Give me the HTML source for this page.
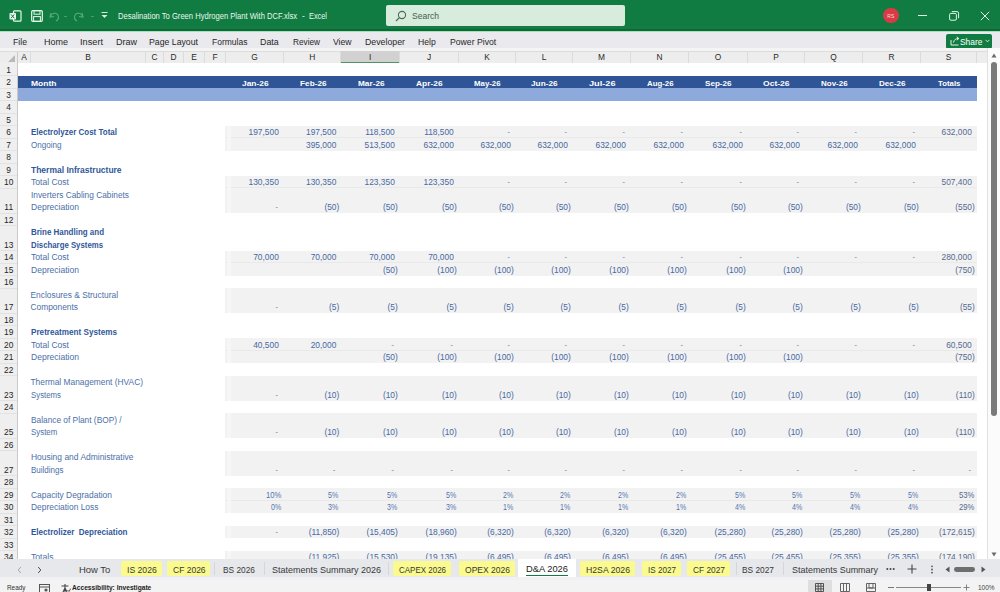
<!DOCTYPE html>
<html><head><meta charset="utf-8"><style>
html,body{margin:0;padding:0;}
body{width:1000px;height:592px;position:relative;overflow:hidden;background:#fff;font-family:"Liberation Sans", sans-serif;}
.b{position:absolute;}
.t{position:absolute;white-space:pre;line-height:1;}
</style></head><body>
<div class='b' style='left:0px;top:0px;width:1000.00px;height:31.00px;background:#107c41;'></div>
<div class='b' style='left:0px;top:26px;width:1000.00px;height:2.00px;background:#187a44;'></div>
<div class='b' style='left:0px;top:29px;width:1000.00px;height:1.80px;background:#0b6a36;'></div>
<div class='b' style='left:0px;top:30.8px;width:1000.00px;height:1.00px;background:#a6dfbb;'></div>
<svg class='b' style='left:9px;top:9.5px;' width='13' height='12' viewBox='0 0 13 12'><rect x='4.5' y='0.8' width='7.5' height='10.4' rx='1' fill='none' stroke='#e9f7ee' stroke-width='1.2'/><rect x='0.5' y='3' width='6.5' height='6.5' rx='0.8' fill='#e9f7ee'/><path d='M2 4.4 L5.3 8.2 M5.3 4.4 L2 8.2' stroke='#107c41' stroke-width='1'/></svg>
<svg class='b' style='left:31px;top:9.5px;' width='12' height='12' viewBox='0 0 12 12'><rect x='0.7' y='0.7' width='10.6' height='10.6' rx='1' fill='none' stroke='#e9f7ee' stroke-width='1.2'/><rect x='3' y='0.7' width='6' height='3.5' fill='none' stroke='#e9f7ee' stroke-width='1'/><rect x='2.6' y='6.6' width='6.8' height='4.7' fill='none' stroke='#e9f7ee' stroke-width='1'/></svg>
<svg class='b' style='left:48px;top:9px;' width='48' height='13' viewBox='0 0 48 13'><path d='M3 4 L2 8 L6 7.5 M2.3 7.5 C4 3 10 3 10.5 8 C10.7 10 9 11.5 8 12' fill='none' stroke='#5aa87a' stroke-width='1.1'/><path d='M16 7.5 H19' stroke='#4e9a6c' stroke-width='1'/><path d='M34 4 L35 8 L31 7.5 M34.7 7.5 C33 3 27 3 26.5 8 C26.3 10 28 11.5 29 12' fill='none' stroke='#5aa87a' stroke-width='1.1'/><path d='M43 7.5 H46' stroke='#4e9a6c' stroke-width='1'/></svg>
<svg class='b' style='left:100px;top:11px;' width='9' height='8' viewBox='0 0 9 8'><path d='M1.5 1.5 H7.5' stroke='#d9efe0' stroke-width='1'/><path d='M1.5 4 L4.5 7 L7.5 4 Z' fill='#d9efe0'/></svg>
<div class='b' style='left:385.5px;top:5px;width:239.50px;height:20.50px;background:#d7ecdd;border-radius:2px;'></div>
<svg class='b' style='left:395px;top:9.5px;' width='12' height='12' viewBox='0 0 12 12'><circle cx='7' cy='5' r='3.6' fill='none' stroke='#4b6a57' stroke-width='1.1'/><path d='M4.4 7.6 L1 11' stroke='#4b6a57' stroke-width='1.2'/></svg>
<div class='t' style='left:412.00px;top:12px;font-size:8.8px;font-weight:400;color:#43604d;transform:scaleX(0.9686);transform-origin:0 0;'>Search</div>
<div class='t' style='left:118.00px;top:12px;font-size:8.4px;font-weight:400;color:#eaf6ee;transform:scaleX(0.9076);transform-origin:0 0;'>Desalination To Green Hydrogen Plant With DCF.xlsx</div>
<div class='t' style='left:302.00px;top:12px;font-size:8.4px;font-weight:400;color:#eaf6ee;'>-</div>
<div class='t' style='left:308.50px;top:12px;font-size:8.4px;font-weight:400;color:#eaf6ee;transform:scaleX(0.8787);transform-origin:0 0;'>Excel</div>
<div class='b' style='left:883px;top:7.5px;width:15.6px;height:15.6px;border-radius:50%;background:#d83b46;'></div>
<div class='t' style='left:887.32px;top:14px;font-size:5px;font-weight:400;color:#ffd9dc;'>RS</div>
<div class='b' style='left:918px;top:15px;width:8.60px;height:1.00px;background:#e3f3e8;'></div>
<svg class='b' style='left:948.5px;top:11px;' width='11' height='10' viewBox='0 0 11 10'><rect x='0.6' y='2.4' width='6.8' height='6.8' rx='1.2' fill='none' stroke='#e3f3e8' stroke-width='1'/><path d='M2.8 0.6 H8 Q9.6 0.6 9.6 2.2 V7.2' fill='none' stroke='#e3f3e8' stroke-width='1'/></svg>
<svg class='b' style='left:980px;top:11px;' width='10' height='10' viewBox='0 0 10 10'><path d='M0.8 0.8 L9.2 9.2 M9.2 0.8 L0.8 9.2' stroke='#e3f3e8' stroke-width='1'/></svg>
<div class='b' style='left:0px;top:31.8px;width:1000.00px;height:16.20px;background:#eaeaee;'></div>
<div class='t' style='left:13.00px;top:38px;font-size:8.5px;font-weight:400;color:#262626;transform:scaleX(1.0217);transform-origin:0 0;'>File</div>
<div class='t' style='left:44.00px;top:38px;font-size:8.5px;font-weight:400;color:#262626;transform:scaleX(1.0579);transform-origin:0 0;'>Home</div>
<div class='t' style='left:80.00px;top:38px;font-size:8.5px;font-weight:400;color:#262626;transform:scaleX(1.0816);transform-origin:0 0;'>Insert</div>
<div class='t' style='left:116.00px;top:38px;font-size:8.5px;font-weight:400;color:#262626;transform:scaleX(1.0583);transform-origin:0 0;'>Draw</div>
<div class='t' style='left:149.00px;top:38px;font-size:8.5px;font-weight:400;color:#262626;transform:scaleX(1.0265);transform-origin:0 0;'>Page Layout</div>
<div class='t' style='left:212.00px;top:38px;font-size:8.5px;font-weight:400;color:#262626;'>Formulas</div>
<div class='t' style='left:260.00px;top:38px;font-size:8.5px;font-weight:400;color:#262626;transform:scaleX(1.0407);transform-origin:0 0;'>Data</div>
<div class='t' style='left:292.50px;top:38px;font-size:8.5px;font-weight:400;color:#262626;transform:scaleX(0.9686);transform-origin:0 0;'>Review</div>
<div class='t' style='left:333.00px;top:38px;font-size:8.5px;font-weight:400;color:#262626;transform:scaleX(1.0174);transform-origin:0 0;'>View</div>
<div class='t' style='left:365.00px;top:38px;font-size:8.5px;font-weight:400;color:#262626;transform:scaleX(1.0323);transform-origin:0 0;'>Developer</div>
<div class='t' style='left:418.00px;top:38px;font-size:8.5px;font-weight:400;color:#262626;transform:scaleX(1.0123);transform-origin:0 0;'>Help</div>
<div class='t' style='left:449.60px;top:38px;font-size:8.5px;font-weight:400;color:#262626;transform:scaleX(1.0185);transform-origin:0 0;'>Power Pivot</div>
<div class='b' style='left:946px;top:33.5px;width:46.00px;height:15.30px;background:#107c41;border-radius:2px;'></div>
<svg class='b' style='left:950px;top:36px;' width='10' height='10' viewBox='0 0 10 10'><path d='M1 4 V9 H8.5 M3.5 6.5 C4 3.5 6 2.5 8.5 2.5 M6.8 0.8 L8.8 2.5 L6.8 4.2' fill='none' stroke='#e3f3e8' stroke-width='1'/></svg>
<div class='t' style='left:959.50px;top:38px;font-size:8.8px;font-weight:400;color:#ffffff;transform:scaleX(0.9581);transform-origin:0 0;'>Share</div>
<svg class='b' style='left:985px;top:39px;' width='5' height='4' viewBox='0 0 5 4'><path d='M0.5 0.8 L2.5 2.8 L4.5 0.8' fill='none' stroke='#e3f3e8' stroke-width='0.9'/></svg>
<div class='b' style='left:0px;top:48px;width:988.00px;height:15.30px;background:#ededed;'></div>
<div class='b' style='left:0px;top:48px;width:988.00px;height:2.50px;background:#f4f4f4;'></div>
<div class='b' style='left:0px;top:50.5px;width:988.00px;height:1.00px;background:#dcdcdc;'></div>
<div class='b' style='left:0px;top:62.5px;width:988.00px;height:0.80px;background:#cfcfcf;'></div>
<svg class='b' style='left:8px;top:55px;' width='7' height='7' viewBox='0 0 7 7'><path d='M7 0 V7 H0 Z' fill='#b9b9b9'/></svg>
<div class='b' style='left:29.5px;top:52px;width:1.00px;height:10.50px;background:#dcdcdc;'></div>
<div class='t' style='left:21.20px;top:53px;font-size:8.4px;font-weight:400;color:#2a2a2a;'>A</div>
<div class='b' style='left:144.5px;top:52px;width:1.00px;height:10.50px;background:#dcdcdc;'></div>
<div class='t' style='left:85.20px;top:53px;font-size:8.4px;font-weight:400;color:#2a2a2a;'>B</div>
<div class='b' style='left:162.5px;top:52px;width:1.00px;height:10.50px;background:#dcdcdc;'></div>
<div class='t' style='left:151.47px;top:53px;font-size:8.4px;font-weight:400;color:#2a2a2a;'>C</div>
<div class='b' style='left:182.5px;top:52px;width:1.00px;height:10.50px;background:#dcdcdc;'></div>
<div class='t' style='left:170.47px;top:53px;font-size:8.4px;font-weight:400;color:#2a2a2a;'>D</div>
<div class='b' style='left:203.5px;top:52px;width:1.00px;height:10.50px;background:#dcdcdc;'></div>
<div class='t' style='left:191.20px;top:53px;font-size:8.4px;font-weight:400;color:#2a2a2a;'>E</div>
<div class='b' style='left:224.5px;top:52px;width:1.00px;height:10.50px;background:#dcdcdc;'></div>
<div class='t' style='left:212.44px;top:53px;font-size:8.4px;font-weight:400;color:#2a2a2a;'>F</div>
<div class='b' style='left:282.5px;top:52px;width:1.00px;height:10.50px;background:#dcdcdc;'></div>
<div class='t' style='left:251.24px;top:53px;font-size:8.4px;font-weight:400;color:#2a2a2a;'>G</div>
<div class='b' style='left:340.0px;top:52px;width:1.00px;height:10.50px;background:#dcdcdc;'></div>
<div class='t' style='left:309.22px;top:53px;font-size:8.4px;font-weight:400;color:#2a2a2a;'>H</div>
<div class='b' style='left:341.0px;top:51px;width:59.00px;height:11.30px;background:#d1d1d1;'></div>
<div class='b' style='left:341.0px;top:62px;width:59.00px;height:1.50px;background:#4f9466;'></div>
<div class='b' style='left:398.5px;top:52px;width:1.00px;height:10.50px;background:#dcdcdc;'></div>
<div class='t' style='left:369.09px;top:53px;font-size:8.4px;font-weight:400;color:#2a2a2a;'>I</div>
<div class='b' style='left:457.5px;top:52px;width:1.00px;height:10.50px;background:#dcdcdc;'></div>
<div class='t' style='left:426.91px;top:53px;font-size:8.4px;font-weight:400;color:#2a2a2a;'>J</div>
<div class='b' style='left:514.5px;top:52px;width:1.00px;height:10.50px;background:#dcdcdc;'></div>
<div class='t' style='left:484.20px;top:53px;font-size:8.4px;font-weight:400;color:#2a2a2a;'>K</div>
<div class='b' style='left:571.5px;top:52px;width:1.00px;height:10.50px;background:#dcdcdc;'></div>
<div class='t' style='left:541.66px;top:53px;font-size:8.4px;font-weight:400;color:#2a2a2a;'>L</div>
<div class='b' style='left:629.5px;top:52px;width:1.00px;height:10.50px;background:#dcdcdc;'></div>
<div class='t' style='left:598.01px;top:53px;font-size:8.4px;font-weight:400;color:#2a2a2a;'>M</div>
<div class='b' style='left:687.5px;top:52px;width:1.00px;height:10.50px;background:#dcdcdc;'></div>
<div class='t' style='left:656.47px;top:53px;font-size:8.4px;font-weight:400;color:#2a2a2a;'>N</div>
<div class='b' style='left:746.5px;top:52px;width:1.00px;height:10.50px;background:#dcdcdc;'></div>
<div class='t' style='left:714.74px;top:53px;font-size:8.4px;font-weight:400;color:#2a2a2a;'>O</div>
<div class='b' style='left:803.5px;top:52px;width:1.00px;height:10.50px;background:#dcdcdc;'></div>
<div class='t' style='left:773.20px;top:53px;font-size:8.4px;font-weight:400;color:#2a2a2a;'>P</div>
<div class='b' style='left:861.5px;top:52px;width:1.00px;height:10.50px;background:#dcdcdc;'></div>
<div class='t' style='left:830.24px;top:53px;font-size:8.4px;font-weight:400;color:#2a2a2a;'>Q</div>
<div class='b' style='left:919.5px;top:52px;width:1.00px;height:10.50px;background:#dcdcdc;'></div>
<div class='t' style='left:888.47px;top:53px;font-size:8.4px;font-weight:400;color:#2a2a2a;'>R</div>
<div class='b' style='left:975.5px;top:52px;width:1.00px;height:10.50px;background:#dcdcdc;'></div>
<div class='t' style='left:945.70px;top:53px;font-size:8.4px;font-weight:400;color:#2a2a2a;'>S</div>
<div class='b' style='left:17px;top:63.3px;width:971.00px;height:495.70px;background:#ffffff;'></div>
<div class='b' style='left:0px;top:63.3px;width:17.00px;height:495.70px;background:#efefef;'></div>
<div class='b' style='left:16.5px;top:51.5px;width:1.00px;height:507.50px;background:#c9c9cc;'></div>
<div class='b' style='left:0px;top:75.0px;width:16.50px;height:1.00px;background:#e2e2e2;'></div>
<div class='t' style='left:6.36px;top:66px;font-size:8.4px;font-weight:400;color:#262626;'>1</div>
<div class='b' style='left:0px;top:87.5px;width:16.50px;height:1.00px;background:#e2e2e2;'></div>
<div class='t' style='left:6.36px;top:78px;font-size:8.4px;font-weight:400;color:#262626;'>2</div>
<div class='b' style='left:0px;top:100.0px;width:16.50px;height:1.00px;background:#e2e2e2;'></div>
<div class='t' style='left:6.36px;top:91px;font-size:8.4px;font-weight:400;color:#262626;'>3</div>
<div class='b' style='left:0px;top:112.5px;width:16.50px;height:1.00px;background:#e2e2e2;'></div>
<div class='t' style='left:6.36px;top:103px;font-size:8.4px;font-weight:400;color:#262626;'>4</div>
<div class='b' style='left:0px;top:125.0px;width:16.50px;height:1.00px;background:#e2e2e2;'></div>
<div class='t' style='left:6.36px;top:116px;font-size:8.4px;font-weight:400;color:#262626;'>5</div>
<div class='b' style='left:0px;top:137.5px;width:16.50px;height:1.00px;background:#e2e2e2;'></div>
<div class='t' style='left:6.36px;top:128px;font-size:8.4px;font-weight:400;color:#262626;'>6</div>
<div class='b' style='left:0px;top:150.0px;width:16.50px;height:1.00px;background:#e2e2e2;'></div>
<div class='t' style='left:6.36px;top:141px;font-size:8.4px;font-weight:400;color:#262626;'>7</div>
<div class='b' style='left:0px;top:162.5px;width:16.50px;height:1.00px;background:#e2e2e2;'></div>
<div class='t' style='left:6.36px;top:153px;font-size:8.4px;font-weight:400;color:#262626;'>8</div>
<div class='b' style='left:0px;top:175.0px;width:16.50px;height:1.00px;background:#e2e2e2;'></div>
<div class='t' style='left:6.36px;top:166px;font-size:8.4px;font-weight:400;color:#262626;'>9</div>
<div class='b' style='left:0px;top:187.5px;width:16.50px;height:1.00px;background:#e2e2e2;'></div>
<div class='t' style='left:4.04px;top:178px;font-size:8.4px;font-weight:400;color:#262626;'>10</div>
<div class='b' style='left:0px;top:212.5px;width:16.50px;height:1.00px;background:#e2e2e2;'></div>
<div class='t' style='left:4.35px;top:203px;font-size:8.4px;font-weight:400;color:#262626;'>11</div>
<div class='b' style='left:0px;top:225.0px;width:16.50px;height:1.00px;background:#e2e2e2;'></div>
<div class='t' style='left:4.04px;top:216px;font-size:8.4px;font-weight:400;color:#262626;'>12</div>
<div class='b' style='left:0px;top:250.0px;width:16.50px;height:1.00px;background:#e2e2e2;'></div>
<div class='t' style='left:4.04px;top:241px;font-size:8.4px;font-weight:400;color:#262626;'>13</div>
<div class='b' style='left:0px;top:262.5px;width:16.50px;height:1.00px;background:#e2e2e2;'></div>
<div class='t' style='left:4.04px;top:253px;font-size:8.4px;font-weight:400;color:#262626;'>14</div>
<div class='b' style='left:0px;top:275.0px;width:16.50px;height:1.00px;background:#e2e2e2;'></div>
<div class='t' style='left:4.04px;top:266px;font-size:8.4px;font-weight:400;color:#262626;'>15</div>
<div class='b' style='left:0px;top:287.5px;width:16.50px;height:1.00px;background:#e2e2e2;'></div>
<div class='t' style='left:4.04px;top:278px;font-size:8.4px;font-weight:400;color:#262626;'>16</div>
<div class='b' style='left:0px;top:312.5px;width:16.50px;height:1.00px;background:#e2e2e2;'></div>
<div class='t' style='left:4.04px;top:303px;font-size:8.4px;font-weight:400;color:#262626;'>17</div>
<div class='b' style='left:0px;top:325.0px;width:16.50px;height:1.00px;background:#e2e2e2;'></div>
<div class='t' style='left:4.04px;top:316px;font-size:8.4px;font-weight:400;color:#262626;'>18</div>
<div class='b' style='left:0px;top:337.5px;width:16.50px;height:1.00px;background:#e2e2e2;'></div>
<div class='t' style='left:4.04px;top:328px;font-size:8.4px;font-weight:400;color:#262626;'>19</div>
<div class='b' style='left:0px;top:350.0px;width:16.50px;height:1.00px;background:#e2e2e2;'></div>
<div class='t' style='left:4.04px;top:341px;font-size:8.4px;font-weight:400;color:#262626;'>20</div>
<div class='b' style='left:0px;top:362.5px;width:16.50px;height:1.00px;background:#e2e2e2;'></div>
<div class='t' style='left:4.04px;top:353px;font-size:8.4px;font-weight:400;color:#262626;'>21</div>
<div class='b' style='left:0px;top:375.0px;width:16.50px;height:1.00px;background:#e2e2e2;'></div>
<div class='t' style='left:4.04px;top:366px;font-size:8.4px;font-weight:400;color:#262626;'>22</div>
<div class='b' style='left:0px;top:400.0px;width:16.50px;height:1.00px;background:#e2e2e2;'></div>
<div class='t' style='left:4.04px;top:391px;font-size:8.4px;font-weight:400;color:#262626;'>23</div>
<div class='b' style='left:0px;top:412.5px;width:16.50px;height:1.00px;background:#e2e2e2;'></div>
<div class='t' style='left:4.04px;top:403px;font-size:8.4px;font-weight:400;color:#262626;'>24</div>
<div class='b' style='left:0px;top:437.5px;width:16.50px;height:1.00px;background:#e2e2e2;'></div>
<div class='t' style='left:4.04px;top:428px;font-size:8.4px;font-weight:400;color:#262626;'>25</div>
<div class='b' style='left:0px;top:450.0px;width:16.50px;height:1.00px;background:#e2e2e2;'></div>
<div class='t' style='left:4.04px;top:441px;font-size:8.4px;font-weight:400;color:#262626;'>26</div>
<div class='b' style='left:0px;top:475.0px;width:16.50px;height:1.00px;background:#e2e2e2;'></div>
<div class='t' style='left:4.04px;top:466px;font-size:8.4px;font-weight:400;color:#262626;'>27</div>
<div class='b' style='left:0px;top:487.5px;width:16.50px;height:1.00px;background:#e2e2e2;'></div>
<div class='t' style='left:4.04px;top:478px;font-size:8.4px;font-weight:400;color:#262626;'>28</div>
<div class='b' style='left:0px;top:500.0px;width:16.50px;height:1.00px;background:#e2e2e2;'></div>
<div class='t' style='left:4.04px;top:491px;font-size:8.4px;font-weight:400;color:#262626;'>29</div>
<div class='b' style='left:0px;top:512.5px;width:16.50px;height:1.00px;background:#e2e2e2;'></div>
<div class='t' style='left:4.04px;top:503px;font-size:8.4px;font-weight:400;color:#262626;'>30</div>
<div class='b' style='left:0px;top:525.0px;width:16.50px;height:1.00px;background:#e2e2e2;'></div>
<div class='t' style='left:4.04px;top:516px;font-size:8.4px;font-weight:400;color:#262626;'>31</div>
<div class='b' style='left:0px;top:537.5px;width:16.50px;height:1.00px;background:#e2e2e2;'></div>
<div class='t' style='left:4.04px;top:528px;font-size:8.4px;font-weight:400;color:#262626;'>32</div>
<div class='b' style='left:0px;top:550.0px;width:16.50px;height:1.00px;background:#e2e2e2;'></div>
<div class='t' style='left:4.04px;top:541px;font-size:8.4px;font-weight:400;color:#262626;'>33</div>
<div class='b' style='left:0px;top:562.5px;width:16.50px;height:1.00px;background:#e2e2e2;'></div>
<div class='t' style='left:4.04px;top:553px;font-size:8.4px;font-weight:400;color:#262626;'>34</div>
<div class='b' style='left:17.5px;top:75.5px;width:959.00px;height:12.50px;background:#2f5597;'></div>
<div class='b' style='left:17.5px;top:88.0px;width:959.00px;height:12.50px;background:#8eaadc;'></div>
<div class='t' style='left:31.00px;top:80px;font-size:7.8px;font-weight:700;color:#ffffff;transform:scaleX(1.0902);transform-origin:0 0;'>Month</div>
<div class='t' style='left:241.90px;top:80px;font-size:7.8px;font-weight:700;color:#ffffff;transform:scaleX(1.0761);transform-origin:0 0;'>Jan-26</div>
<div class='t' style='left:299.65px;top:80px;font-size:7.8px;font-weight:700;color:#ffffff;transform:scaleX(1.0580);transform-origin:0 0;'>Feb-26</div>
<div class='t' style='left:357.65px;top:80px;font-size:7.8px;font-weight:700;color:#ffffff;transform:scaleX(1.0580);transform-origin:0 0;'>Mar-26</div>
<div class='t' style='left:416.40px;top:80px;font-size:7.8px;font-weight:700;color:#ffffff;transform:scaleX(1.0768);transform-origin:0 0;'>Apr-26</div>
<div class='t' style='left:474.40px;top:80px;font-size:7.8px;font-weight:700;color:#ffffff;transform:scaleX(1.0061);transform-origin:0 0;'>May-26</div>
<div class='t' style='left:531.40px;top:80px;font-size:7.8px;font-weight:700;color:#ffffff;transform:scaleX(1.0580);transform-origin:0 0;'>Jun-26</div>
<div class='t' style='left:588.90px;top:80px;font-size:7.8px;font-weight:700;color:#ffffff;transform:scaleX(1.1798);transform-origin:0 0;'>Jul-26</div>
<div class='t' style='left:646.90px;top:80px;font-size:7.8px;font-weight:700;color:#ffffff;transform:scaleX(1.0061);transform-origin:0 0;'>Aug-26</div>
<div class='t' style='left:705.40px;top:80px;font-size:7.8px;font-weight:700;color:#ffffff;transform:scaleX(1.0400);transform-origin:0 0;'>Sep-26</div>
<div class='t' style='left:763.40px;top:80px;font-size:7.8px;font-weight:700;color:#ffffff;transform:scaleX(1.0955);transform-origin:0 0;'>Oct-26</div>
<div class='t' style='left:820.90px;top:80px;font-size:7.8px;font-weight:700;color:#ffffff;transform:scaleX(1.0231);transform-origin:0 0;'>Nov-26</div>
<div class='t' style='left:878.90px;top:80px;font-size:7.8px;font-weight:700;color:#ffffff;transform:scaleX(1.0400);transform-origin:0 0;'>Dec-26</div>
<div class='t' style='left:938.00px;top:80px;font-size:7.8px;font-weight:700;color:#ffffff;'>Totals</div>
<div class='b' style='left:225px;top:125.5px;width:752.00px;height:25.00px;background:#f2f2f2;'></div>
<div class='b' style='left:225px;top:137.4px;width:752.00px;height:1.00px;background:#e9e9e9;'></div>
<div class='b' style='left:227px;top:125.5px;width:3.50px;height:25.00px;background:#f6f6f6;'></div>
<div class='b' style='left:225px;top:175.5px;width:752.00px;height:37.50px;background:#f2f2f2;'></div>
<div class='b' style='left:225px;top:187.4px;width:752.00px;height:1.00px;background:#e9e9e9;'></div>
<div class='b' style='left:227px;top:175.5px;width:3.50px;height:37.50px;background:#f6f6f6;'></div>
<div class='b' style='left:225px;top:250.5px;width:752.00px;height:25.00px;background:#f2f2f2;'></div>
<div class='b' style='left:225px;top:262.4px;width:752.00px;height:1.00px;background:#e9e9e9;'></div>
<div class='b' style='left:227px;top:250.5px;width:3.50px;height:25.00px;background:#f6f6f6;'></div>
<div class='b' style='left:225px;top:288.0px;width:752.00px;height:25.00px;background:#f2f2f2;'></div>
<div class='b' style='left:227px;top:288.0px;width:3.50px;height:25.00px;background:#f6f6f6;'></div>
<div class='b' style='left:225px;top:338.0px;width:752.00px;height:25.00px;background:#f2f2f2;'></div>
<div class='b' style='left:225px;top:349.9px;width:752.00px;height:1.00px;background:#e9e9e9;'></div>
<div class='b' style='left:227px;top:338.0px;width:3.50px;height:25.00px;background:#f6f6f6;'></div>
<div class='b' style='left:225px;top:375.5px;width:752.00px;height:25.00px;background:#f2f2f2;'></div>
<div class='b' style='left:227px;top:375.5px;width:3.50px;height:25.00px;background:#f6f6f6;'></div>
<div class='b' style='left:225px;top:413.0px;width:752.00px;height:25.00px;background:#f2f2f2;'></div>
<div class='b' style='left:227px;top:413.0px;width:3.50px;height:25.00px;background:#f6f6f6;'></div>
<div class='b' style='left:225px;top:450.5px;width:752.00px;height:25.00px;background:#f2f2f2;'></div>
<div class='b' style='left:227px;top:450.5px;width:3.50px;height:25.00px;background:#f6f6f6;'></div>
<div class='b' style='left:225px;top:488.0px;width:752.00px;height:25.00px;background:#f2f2f2;'></div>
<div class='b' style='left:225px;top:499.9px;width:752.00px;height:1.00px;background:#e9e9e9;'></div>
<div class='b' style='left:227px;top:488.0px;width:3.50px;height:25.00px;background:#f6f6f6;'></div>
<div class='b' style='left:225px;top:525.5px;width:752.00px;height:12.50px;background:#f2f2f2;'></div>
<div class='b' style='left:227px;top:525.5px;width:3.50px;height:12.50px;background:#f6f6f6;'></div>
<div class='b' style='left:225px;top:550.5px;width:752.00px;height:12.50px;background:#f2f2f2;'></div>
<div class='b' style='left:227px;top:550.5px;width:3.50px;height:12.50px;background:#f6f6f6;'></div>
<div class='t' style='left:30.50px;top:129px;font-size:8.2px;font-weight:700;color:#30579a;transform:scaleX(0.9759);transform-origin:0 0;'>Electrolyzer Cost Total</div>
<div class='t' style='left:30.50px;top:141px;font-size:8.4px;font-weight:400;color:#4b6fa8;transform:scaleX(0.9630);transform-origin:0 0;'>Ongoing</div>
<div class='t' style='left:30.50px;top:167px;font-size:8.2px;font-weight:700;color:#30579a;transform:scaleX(1.0371);transform-origin:0 0;'>Thermal Infrastructure</div>
<div class='t' style='left:30.50px;top:178px;font-size:8.4px;font-weight:400;color:#4b6fa8;transform:scaleX(1.0201);transform-origin:0 0;'>Total Cost</div>
<div class='t' style='left:30.50px;top:191px;font-size:8.4px;font-weight:400;color:#4b6fa8;transform:scaleX(0.9929);transform-origin:0 0;'>Inverters Cabling Cabinets</div>
<div class='t' style='left:30.50px;top:203px;font-size:8.4px;font-weight:400;color:#4b6fa8;transform:scaleX(1.0206);transform-origin:0 0;'>Depreciation</div>
<div class='t' style='left:30.50px;top:229px;font-size:8.2px;font-weight:700;color:#30579a;transform:scaleX(0.9725);transform-origin:0 0;'>Brine Handling and</div>
<div class='t' style='left:30.50px;top:242px;font-size:8.2px;font-weight:700;color:#30579a;transform:scaleX(0.9531);transform-origin:0 0;'>Discharge Systems</div>
<div class='t' style='left:30.50px;top:253px;font-size:8.4px;font-weight:400;color:#4b6fa8;transform:scaleX(1.0201);transform-origin:0 0;'>Total Cost</div>
<div class='t' style='left:30.50px;top:266px;font-size:8.4px;font-weight:400;color:#4b6fa8;transform:scaleX(1.0206);transform-origin:0 0;'>Depreciation</div>
<div class='t' style='left:30.50px;top:291px;font-size:8.4px;font-weight:400;color:#4b6fa8;'>Enclosures &amp; Structural</div>
<div class='t' style='left:30.50px;top:303px;font-size:8.4px;font-weight:400;color:#4b6fa8;'>Components</div>
<div class='t' style='left:30.50px;top:329px;font-size:8.2px;font-weight:700;color:#30579a;transform:scaleX(0.9946);transform-origin:0 0;'>Pretreatment Systems</div>
<div class='t' style='left:30.50px;top:341px;font-size:8.4px;font-weight:400;color:#4b6fa8;transform:scaleX(1.0201);transform-origin:0 0;'>Total Cost</div>
<div class='t' style='left:30.50px;top:353px;font-size:8.4px;font-weight:400;color:#4b6fa8;transform:scaleX(1.0206);transform-origin:0 0;'>Depreciation</div>
<div class='t' style='left:30.50px;top:378px;font-size:8.4px;font-weight:400;color:#4b6fa8;'>Thermal Management (HVAC)</div>
<div class='t' style='left:30.50px;top:391px;font-size:8.4px;font-weight:400;color:#4b6fa8;transform:scaleX(0.9339);transform-origin:0 0;'>Systems</div>
<div class='t' style='left:30.50px;top:416px;font-size:8.4px;font-weight:400;color:#4b6fa8;transform:scaleX(0.9929);transform-origin:0 0;'>Balance of Plant (BOP) /</div>
<div class='t' style='left:30.50px;top:428px;font-size:8.4px;font-weight:400;color:#4b6fa8;transform:scaleX(0.9414);transform-origin:0 0;'>System</div>
<div class='t' style='left:30.50px;top:453px;font-size:8.4px;font-weight:400;color:#4b6fa8;transform:scaleX(1.0099);transform-origin:0 0;'>Housing and Administrative</div>
<div class='t' style='left:30.50px;top:466px;font-size:8.4px;font-weight:400;color:#4b6fa8;transform:scaleX(0.9529);transform-origin:0 0;'>Buildings</div>
<div class='t' style='left:30.50px;top:491px;font-size:8.4px;font-weight:400;color:#4b6fa8;transform:scaleX(1.0056);transform-origin:0 0;'>Capacity Degradation</div>
<div class='t' style='left:30.50px;top:503px;font-size:8.4px;font-weight:400;color:#4b6fa8;transform:scaleX(1.0068);transform-origin:0 0;'>Depreciation Loss</div>
<div class='t' style='left:30.50px;top:529px;font-size:8.2px;font-weight:700;color:#30579a;transform:scaleX(0.9817);transform-origin:0 0;'>Electrolizer  Depreciation</div>
<div class='t' style='left:30.50px;top:553px;font-size:8.4px;font-weight:400;color:#4b6fa8;transform:scaleX(1.0278);transform-origin:0 0;'>Totals</div>
<div class='t' style='left:248.52px;top:128px;font-size:8.4px;font-weight:400;color:#4868a2;'>197,500</div>
<div class='t' style='left:306.02px;top:128px;font-size:8.4px;font-weight:400;color:#4868a2;'>197,500</div>
<div class='t' style='left:365.14px;top:128px;font-size:8.4px;font-weight:400;color:#4868a2;'>118,500</div>
<div class='t' style='left:424.14px;top:128px;font-size:8.4px;font-weight:400;color:#4868a2;'>118,500</div>
<div class='t' style='left:507.20px;top:128px;font-size:8.4px;font-weight:400;color:#8a9ab5;'>-</div>
<div class='t' style='left:564.20px;top:128px;font-size:8.4px;font-weight:400;color:#8a9ab5;'>-</div>
<div class='t' style='left:622.20px;top:128px;font-size:8.4px;font-weight:400;color:#8a9ab5;'>-</div>
<div class='t' style='left:680.20px;top:128px;font-size:8.4px;font-weight:400;color:#8a9ab5;'>-</div>
<div class='t' style='left:739.20px;top:128px;font-size:8.4px;font-weight:400;color:#8a9ab5;'>-</div>
<div class='t' style='left:796.20px;top:128px;font-size:8.4px;font-weight:400;color:#8a9ab5;'>-</div>
<div class='t' style='left:854.20px;top:128px;font-size:8.4px;font-weight:400;color:#8a9ab5;'>-</div>
<div class='t' style='left:912.20px;top:128px;font-size:8.4px;font-weight:400;color:#8a9ab5;'>-</div>
<div class='t' style='left:941.52px;top:128px;font-size:8.4px;font-weight:400;color:#55698f;'>632,000</div>
<div class='t' style='left:306.02px;top:141px;font-size:8.4px;font-weight:400;color:#4868a2;'>395,000</div>
<div class='t' style='left:364.52px;top:141px;font-size:8.4px;font-weight:400;color:#4868a2;'>513,500</div>
<div class='t' style='left:423.52px;top:141px;font-size:8.4px;font-weight:400;color:#4868a2;'>632,000</div>
<div class='t' style='left:480.52px;top:141px;font-size:8.4px;font-weight:400;color:#4868a2;'>632,000</div>
<div class='t' style='left:537.52px;top:141px;font-size:8.4px;font-weight:400;color:#4868a2;'>632,000</div>
<div class='t' style='left:595.52px;top:141px;font-size:8.4px;font-weight:400;color:#4868a2;'>632,000</div>
<div class='t' style='left:653.52px;top:141px;font-size:8.4px;font-weight:400;color:#4868a2;'>632,000</div>
<div class='t' style='left:712.52px;top:141px;font-size:8.4px;font-weight:400;color:#4868a2;'>632,000</div>
<div class='t' style='left:769.52px;top:141px;font-size:8.4px;font-weight:400;color:#4868a2;'>632,000</div>
<div class='t' style='left:827.52px;top:141px;font-size:8.4px;font-weight:400;color:#4868a2;'>632,000</div>
<div class='t' style='left:885.52px;top:141px;font-size:8.4px;font-weight:400;color:#4868a2;'>632,000</div>
<div class='t' style='left:248.52px;top:178px;font-size:8.4px;font-weight:400;color:#4868a2;'>130,350</div>
<div class='t' style='left:306.02px;top:178px;font-size:8.4px;font-weight:400;color:#4868a2;'>130,350</div>
<div class='t' style='left:364.52px;top:178px;font-size:8.4px;font-weight:400;color:#4868a2;'>123,350</div>
<div class='t' style='left:423.52px;top:178px;font-size:8.4px;font-weight:400;color:#4868a2;'>123,350</div>
<div class='t' style='left:507.20px;top:178px;font-size:8.4px;font-weight:400;color:#8a9ab5;'>-</div>
<div class='t' style='left:564.20px;top:178px;font-size:8.4px;font-weight:400;color:#8a9ab5;'>-</div>
<div class='t' style='left:622.20px;top:178px;font-size:8.4px;font-weight:400;color:#8a9ab5;'>-</div>
<div class='t' style='left:680.20px;top:178px;font-size:8.4px;font-weight:400;color:#8a9ab5;'>-</div>
<div class='t' style='left:739.20px;top:178px;font-size:8.4px;font-weight:400;color:#8a9ab5;'>-</div>
<div class='t' style='left:796.20px;top:178px;font-size:8.4px;font-weight:400;color:#8a9ab5;'>-</div>
<div class='t' style='left:854.20px;top:178px;font-size:8.4px;font-weight:400;color:#8a9ab5;'>-</div>
<div class='t' style='left:912.20px;top:178px;font-size:8.4px;font-weight:400;color:#8a9ab5;'>-</div>
<div class='t' style='left:941.52px;top:178px;font-size:8.4px;font-weight:400;color:#55698f;'>507,400</div>
<div class='t' style='left:275.20px;top:203px;font-size:8.4px;font-weight:400;color:#8a9ab5;'>-</div>
<div class='t' style='left:324.39px;top:203px;font-size:8.4px;font-weight:400;color:#4868a2;'>(50)</div>
<div class='t' style='left:382.89px;top:203px;font-size:8.4px;font-weight:400;color:#4868a2;'>(50)</div>
<div class='t' style='left:441.89px;top:203px;font-size:8.4px;font-weight:400;color:#4868a2;'>(50)</div>
<div class='t' style='left:498.89px;top:203px;font-size:8.4px;font-weight:400;color:#4868a2;'>(50)</div>
<div class='t' style='left:555.89px;top:203px;font-size:8.4px;font-weight:400;color:#4868a2;'>(50)</div>
<div class='t' style='left:613.89px;top:203px;font-size:8.4px;font-weight:400;color:#4868a2;'>(50)</div>
<div class='t' style='left:671.89px;top:203px;font-size:8.4px;font-weight:400;color:#4868a2;'>(50)</div>
<div class='t' style='left:730.89px;top:203px;font-size:8.4px;font-weight:400;color:#4868a2;'>(50)</div>
<div class='t' style='left:787.89px;top:203px;font-size:8.4px;font-weight:400;color:#4868a2;'>(50)</div>
<div class='t' style='left:845.89px;top:203px;font-size:8.4px;font-weight:400;color:#4868a2;'>(50)</div>
<div class='t' style='left:903.89px;top:203px;font-size:8.4px;font-weight:400;color:#4868a2;'>(50)</div>
<div class='t' style='left:955.24px;top:203px;font-size:8.4px;font-weight:400;color:#55698f;'>(550)</div>
<div class='t' style='left:253.18px;top:253px;font-size:8.4px;font-weight:400;color:#4868a2;'>70,000</div>
<div class='t' style='left:310.68px;top:253px;font-size:8.4px;font-weight:400;color:#4868a2;'>70,000</div>
<div class='t' style='left:369.18px;top:253px;font-size:8.4px;font-weight:400;color:#4868a2;'>70,000</div>
<div class='t' style='left:428.18px;top:253px;font-size:8.4px;font-weight:400;color:#4868a2;'>70,000</div>
<div class='t' style='left:507.20px;top:253px;font-size:8.4px;font-weight:400;color:#8a9ab5;'>-</div>
<div class='t' style='left:564.20px;top:253px;font-size:8.4px;font-weight:400;color:#8a9ab5;'>-</div>
<div class='t' style='left:622.20px;top:253px;font-size:8.4px;font-weight:400;color:#8a9ab5;'>-</div>
<div class='t' style='left:680.20px;top:253px;font-size:8.4px;font-weight:400;color:#8a9ab5;'>-</div>
<div class='t' style='left:739.20px;top:253px;font-size:8.4px;font-weight:400;color:#8a9ab5;'>-</div>
<div class='t' style='left:796.20px;top:253px;font-size:8.4px;font-weight:400;color:#8a9ab5;'>-</div>
<div class='t' style='left:854.20px;top:253px;font-size:8.4px;font-weight:400;color:#8a9ab5;'>-</div>
<div class='t' style='left:912.20px;top:253px;font-size:8.4px;font-weight:400;color:#8a9ab5;'>-</div>
<div class='t' style='left:941.52px;top:253px;font-size:8.4px;font-weight:400;color:#55698f;'>280,000</div>
<div class='t' style='left:382.89px;top:266px;font-size:8.4px;font-weight:400;color:#4868a2;'>(50)</div>
<div class='t' style='left:437.24px;top:266px;font-size:8.4px;font-weight:400;color:#4868a2;'>(100)</div>
<div class='t' style='left:494.24px;top:266px;font-size:8.4px;font-weight:400;color:#4868a2;'>(100)</div>
<div class='t' style='left:551.24px;top:266px;font-size:8.4px;font-weight:400;color:#4868a2;'>(100)</div>
<div class='t' style='left:609.24px;top:266px;font-size:8.4px;font-weight:400;color:#4868a2;'>(100)</div>
<div class='t' style='left:667.24px;top:266px;font-size:8.4px;font-weight:400;color:#4868a2;'>(100)</div>
<div class='t' style='left:726.24px;top:266px;font-size:8.4px;font-weight:400;color:#4868a2;'>(100)</div>
<div class='t' style='left:783.24px;top:266px;font-size:8.4px;font-weight:400;color:#4868a2;'>(100)</div>
<div class='t' style='left:955.24px;top:266px;font-size:8.4px;font-weight:400;color:#55698f;'>(750)</div>
<div class='t' style='left:275.20px;top:303px;font-size:8.4px;font-weight:400;color:#8a9ab5;'>-</div>
<div class='t' style='left:329.05px;top:303px;font-size:8.4px;font-weight:400;color:#4868a2;'>(5)</div>
<div class='t' style='left:387.55px;top:303px;font-size:8.4px;font-weight:400;color:#4868a2;'>(5)</div>
<div class='t' style='left:446.55px;top:303px;font-size:8.4px;font-weight:400;color:#4868a2;'>(5)</div>
<div class='t' style='left:503.55px;top:303px;font-size:8.4px;font-weight:400;color:#4868a2;'>(5)</div>
<div class='t' style='left:560.55px;top:303px;font-size:8.4px;font-weight:400;color:#4868a2;'>(5)</div>
<div class='t' style='left:618.55px;top:303px;font-size:8.4px;font-weight:400;color:#4868a2;'>(5)</div>
<div class='t' style='left:676.55px;top:303px;font-size:8.4px;font-weight:400;color:#4868a2;'>(5)</div>
<div class='t' style='left:735.55px;top:303px;font-size:8.4px;font-weight:400;color:#4868a2;'>(5)</div>
<div class='t' style='left:792.55px;top:303px;font-size:8.4px;font-weight:400;color:#4868a2;'>(5)</div>
<div class='t' style='left:850.55px;top:303px;font-size:8.4px;font-weight:400;color:#4868a2;'>(5)</div>
<div class='t' style='left:908.55px;top:303px;font-size:8.4px;font-weight:400;color:#4868a2;'>(5)</div>
<div class='t' style='left:959.89px;top:303px;font-size:8.4px;font-weight:400;color:#55698f;'>(55)</div>
<div class='t' style='left:253.18px;top:341px;font-size:8.4px;font-weight:400;color:#4868a2;'>40,500</div>
<div class='t' style='left:310.68px;top:341px;font-size:8.4px;font-weight:400;color:#4868a2;'>20,000</div>
<div class='t' style='left:391.20px;top:341px;font-size:8.4px;font-weight:400;color:#8a9ab5;'>-</div>
<div class='t' style='left:450.20px;top:341px;font-size:8.4px;font-weight:400;color:#8a9ab5;'>-</div>
<div class='t' style='left:507.20px;top:341px;font-size:8.4px;font-weight:400;color:#8a9ab5;'>-</div>
<div class='t' style='left:564.20px;top:341px;font-size:8.4px;font-weight:400;color:#8a9ab5;'>-</div>
<div class='t' style='left:622.20px;top:341px;font-size:8.4px;font-weight:400;color:#8a9ab5;'>-</div>
<div class='t' style='left:680.20px;top:341px;font-size:8.4px;font-weight:400;color:#8a9ab5;'>-</div>
<div class='t' style='left:739.20px;top:341px;font-size:8.4px;font-weight:400;color:#8a9ab5;'>-</div>
<div class='t' style='left:796.20px;top:341px;font-size:8.4px;font-weight:400;color:#8a9ab5;'>-</div>
<div class='t' style='left:854.20px;top:341px;font-size:8.4px;font-weight:400;color:#8a9ab5;'>-</div>
<div class='t' style='left:912.20px;top:341px;font-size:8.4px;font-weight:400;color:#8a9ab5;'>-</div>
<div class='t' style='left:946.17px;top:341px;font-size:8.4px;font-weight:400;color:#55698f;'>60,500</div>
<div class='t' style='left:382.89px;top:353px;font-size:8.4px;font-weight:400;color:#4868a2;'>(50)</div>
<div class='t' style='left:437.24px;top:353px;font-size:8.4px;font-weight:400;color:#4868a2;'>(100)</div>
<div class='t' style='left:494.24px;top:353px;font-size:8.4px;font-weight:400;color:#4868a2;'>(100)</div>
<div class='t' style='left:551.24px;top:353px;font-size:8.4px;font-weight:400;color:#4868a2;'>(100)</div>
<div class='t' style='left:609.24px;top:353px;font-size:8.4px;font-weight:400;color:#4868a2;'>(100)</div>
<div class='t' style='left:667.24px;top:353px;font-size:8.4px;font-weight:400;color:#4868a2;'>(100)</div>
<div class='t' style='left:726.24px;top:353px;font-size:8.4px;font-weight:400;color:#4868a2;'>(100)</div>
<div class='t' style='left:783.24px;top:353px;font-size:8.4px;font-weight:400;color:#4868a2;'>(100)</div>
<div class='t' style='left:955.24px;top:353px;font-size:8.4px;font-weight:400;color:#55698f;'>(750)</div>
<div class='t' style='left:275.20px;top:391px;font-size:8.4px;font-weight:400;color:#8a9ab5;'>-</div>
<div class='t' style='left:324.39px;top:391px;font-size:8.4px;font-weight:400;color:#4868a2;'>(10)</div>
<div class='t' style='left:382.89px;top:391px;font-size:8.4px;font-weight:400;color:#4868a2;'>(10)</div>
<div class='t' style='left:441.89px;top:391px;font-size:8.4px;font-weight:400;color:#4868a2;'>(10)</div>
<div class='t' style='left:498.89px;top:391px;font-size:8.4px;font-weight:400;color:#4868a2;'>(10)</div>
<div class='t' style='left:555.89px;top:391px;font-size:8.4px;font-weight:400;color:#4868a2;'>(10)</div>
<div class='t' style='left:613.89px;top:391px;font-size:8.4px;font-weight:400;color:#4868a2;'>(10)</div>
<div class='t' style='left:671.89px;top:391px;font-size:8.4px;font-weight:400;color:#4868a2;'>(10)</div>
<div class='t' style='left:730.89px;top:391px;font-size:8.4px;font-weight:400;color:#4868a2;'>(10)</div>
<div class='t' style='left:787.89px;top:391px;font-size:8.4px;font-weight:400;color:#4868a2;'>(10)</div>
<div class='t' style='left:845.89px;top:391px;font-size:8.4px;font-weight:400;color:#4868a2;'>(10)</div>
<div class='t' style='left:903.89px;top:391px;font-size:8.4px;font-weight:400;color:#4868a2;'>(10)</div>
<div class='t' style='left:955.86px;top:391px;font-size:8.4px;font-weight:400;color:#55698f;'>(110)</div>
<div class='t' style='left:275.20px;top:428px;font-size:8.4px;font-weight:400;color:#8a9ab5;'>-</div>
<div class='t' style='left:324.39px;top:428px;font-size:8.4px;font-weight:400;color:#4868a2;'>(10)</div>
<div class='t' style='left:382.89px;top:428px;font-size:8.4px;font-weight:400;color:#4868a2;'>(10)</div>
<div class='t' style='left:441.89px;top:428px;font-size:8.4px;font-weight:400;color:#4868a2;'>(10)</div>
<div class='t' style='left:498.89px;top:428px;font-size:8.4px;font-weight:400;color:#4868a2;'>(10)</div>
<div class='t' style='left:555.89px;top:428px;font-size:8.4px;font-weight:400;color:#4868a2;'>(10)</div>
<div class='t' style='left:613.89px;top:428px;font-size:8.4px;font-weight:400;color:#4868a2;'>(10)</div>
<div class='t' style='left:671.89px;top:428px;font-size:8.4px;font-weight:400;color:#4868a2;'>(10)</div>
<div class='t' style='left:730.89px;top:428px;font-size:8.4px;font-weight:400;color:#4868a2;'>(10)</div>
<div class='t' style='left:787.89px;top:428px;font-size:8.4px;font-weight:400;color:#4868a2;'>(10)</div>
<div class='t' style='left:845.89px;top:428px;font-size:8.4px;font-weight:400;color:#4868a2;'>(10)</div>
<div class='t' style='left:903.89px;top:428px;font-size:8.4px;font-weight:400;color:#4868a2;'>(10)</div>
<div class='t' style='left:955.86px;top:428px;font-size:8.4px;font-weight:400;color:#55698f;'>(110)</div>
<div class='t' style='left:275.20px;top:466px;font-size:8.4px;font-weight:400;color:#8a9ab5;'>-</div>
<div class='t' style='left:332.70px;top:466px;font-size:8.4px;font-weight:400;color:#8a9ab5;'>-</div>
<div class='t' style='left:391.20px;top:466px;font-size:8.4px;font-weight:400;color:#8a9ab5;'>-</div>
<div class='t' style='left:450.20px;top:466px;font-size:8.4px;font-weight:400;color:#8a9ab5;'>-</div>
<div class='t' style='left:507.20px;top:466px;font-size:8.4px;font-weight:400;color:#8a9ab5;'>-</div>
<div class='t' style='left:564.20px;top:466px;font-size:8.4px;font-weight:400;color:#8a9ab5;'>-</div>
<div class='t' style='left:622.20px;top:466px;font-size:8.4px;font-weight:400;color:#8a9ab5;'>-</div>
<div class='t' style='left:680.20px;top:466px;font-size:8.4px;font-weight:400;color:#8a9ab5;'>-</div>
<div class='t' style='left:739.20px;top:466px;font-size:8.4px;font-weight:400;color:#8a9ab5;'>-</div>
<div class='t' style='left:796.20px;top:466px;font-size:8.4px;font-weight:400;color:#8a9ab5;'>-</div>
<div class='t' style='left:854.20px;top:466px;font-size:8.4px;font-weight:400;color:#8a9ab5;'>-</div>
<div class='t' style='left:912.20px;top:466px;font-size:8.4px;font-weight:400;color:#8a9ab5;'>-</div>
<div class='t' style='left:968.20px;top:466px;font-size:8.4px;font-weight:400;color:#8a9ab5;'>-</div>
<div class='t' style='left:265.60px;top:491px;font-size:8.4px;font-weight:400;color:#5275ad;transform:scaleX(0.9185);transform-origin:0 0;'>10%</div>
<div class='t' style='left:328.30px;top:491px;font-size:8.4px;font-weight:400;color:#5275ad;transform:scaleX(0.8423);transform-origin:0 0;'>5%</div>
<div class='t' style='left:386.80px;top:491px;font-size:8.4px;font-weight:400;color:#5275ad;transform:scaleX(0.8423);transform-origin:0 0;'>5%</div>
<div class='t' style='left:445.80px;top:491px;font-size:8.4px;font-weight:400;color:#5275ad;transform:scaleX(0.8423);transform-origin:0 0;'>5%</div>
<div class='t' style='left:502.80px;top:491px;font-size:8.4px;font-weight:400;color:#5275ad;transform:scaleX(0.8423);transform-origin:0 0;'>2%</div>
<div class='t' style='left:559.80px;top:491px;font-size:8.4px;font-weight:400;color:#5275ad;transform:scaleX(0.8423);transform-origin:0 0;'>2%</div>
<div class='t' style='left:617.80px;top:491px;font-size:8.4px;font-weight:400;color:#5275ad;transform:scaleX(0.8423);transform-origin:0 0;'>2%</div>
<div class='t' style='left:675.80px;top:491px;font-size:8.4px;font-weight:400;color:#5275ad;transform:scaleX(0.8423);transform-origin:0 0;'>2%</div>
<div class='t' style='left:734.80px;top:491px;font-size:8.4px;font-weight:400;color:#5275ad;transform:scaleX(0.8423);transform-origin:0 0;'>5%</div>
<div class='t' style='left:791.80px;top:491px;font-size:8.4px;font-weight:400;color:#5275ad;transform:scaleX(0.8423);transform-origin:0 0;'>5%</div>
<div class='t' style='left:849.80px;top:491px;font-size:8.4px;font-weight:400;color:#5275ad;transform:scaleX(0.8423);transform-origin:0 0;'>5%</div>
<div class='t' style='left:907.80px;top:491px;font-size:8.4px;font-weight:400;color:#5275ad;transform:scaleX(0.8423);transform-origin:0 0;'>5%</div>
<div class='t' style='left:958.60px;top:491px;font-size:8.4px;font-weight:400;color:#55698f;transform:scaleX(0.9185);transform-origin:0 0;'>53%</div>
<div class='t' style='left:270.80px;top:503px;font-size:8.4px;font-weight:400;color:#5275ad;transform:scaleX(0.8423);transform-origin:0 0;'>0%</div>
<div class='t' style='left:328.30px;top:503px;font-size:8.4px;font-weight:400;color:#5275ad;transform:scaleX(0.8423);transform-origin:0 0;'>3%</div>
<div class='t' style='left:386.80px;top:503px;font-size:8.4px;font-weight:400;color:#5275ad;transform:scaleX(0.8423);transform-origin:0 0;'>3%</div>
<div class='t' style='left:445.80px;top:503px;font-size:8.4px;font-weight:400;color:#5275ad;transform:scaleX(0.8423);transform-origin:0 0;'>3%</div>
<div class='t' style='left:502.80px;top:503px;font-size:8.4px;font-weight:400;color:#5275ad;transform:scaleX(0.8423);transform-origin:0 0;'>1%</div>
<div class='t' style='left:559.80px;top:503px;font-size:8.4px;font-weight:400;color:#5275ad;transform:scaleX(0.8423);transform-origin:0 0;'>1%</div>
<div class='t' style='left:617.80px;top:503px;font-size:8.4px;font-weight:400;color:#5275ad;transform:scaleX(0.8423);transform-origin:0 0;'>1%</div>
<div class='t' style='left:675.80px;top:503px;font-size:8.4px;font-weight:400;color:#5275ad;transform:scaleX(0.8423);transform-origin:0 0;'>1%</div>
<div class='t' style='left:734.80px;top:503px;font-size:8.4px;font-weight:400;color:#5275ad;transform:scaleX(0.8423);transform-origin:0 0;'>4%</div>
<div class='t' style='left:791.80px;top:503px;font-size:8.4px;font-weight:400;color:#5275ad;transform:scaleX(0.8423);transform-origin:0 0;'>4%</div>
<div class='t' style='left:849.80px;top:503px;font-size:8.4px;font-weight:400;color:#5275ad;transform:scaleX(0.8423);transform-origin:0 0;'>4%</div>
<div class='t' style='left:907.80px;top:503px;font-size:8.4px;font-weight:400;color:#5275ad;transform:scaleX(0.8423);transform-origin:0 0;'>4%</div>
<div class='t' style='left:958.60px;top:503px;font-size:8.4px;font-weight:400;color:#55698f;transform:scaleX(0.9185);transform-origin:0 0;'>29%</div>
<div class='t' style='left:275.20px;top:528px;font-size:8.4px;font-weight:400;color:#8a9ab5;'>-</div>
<div class='t' style='left:308.72px;top:528px;font-size:8.4px;font-weight:400;color:#4868a2;'>(11,850)</div>
<div class='t' style='left:366.60px;top:528px;font-size:8.4px;font-weight:400;color:#4868a2;'>(15,405)</div>
<div class='t' style='left:425.60px;top:528px;font-size:8.4px;font-weight:400;color:#4868a2;'>(18,960)</div>
<div class='t' style='left:487.25px;top:528px;font-size:8.4px;font-weight:400;color:#4868a2;'>(6,320)</div>
<div class='t' style='left:544.25px;top:528px;font-size:8.4px;font-weight:400;color:#4868a2;'>(6,320)</div>
<div class='t' style='left:602.25px;top:528px;font-size:8.4px;font-weight:400;color:#4868a2;'>(6,320)</div>
<div class='t' style='left:660.25px;top:528px;font-size:8.4px;font-weight:400;color:#4868a2;'>(6,320)</div>
<div class='t' style='left:714.60px;top:528px;font-size:8.4px;font-weight:400;color:#4868a2;'>(25,280)</div>
<div class='t' style='left:771.60px;top:528px;font-size:8.4px;font-weight:400;color:#4868a2;'>(25,280)</div>
<div class='t' style='left:829.60px;top:528px;font-size:8.4px;font-weight:400;color:#4868a2;'>(25,280)</div>
<div class='t' style='left:887.60px;top:528px;font-size:8.4px;font-weight:400;color:#4868a2;'>(25,280)</div>
<div class='t' style='left:938.94px;top:528px;font-size:8.4px;font-weight:400;color:#55698f;'>(172,615)</div>
<div class='t' style='left:308.72px;top:553px;font-size:8.4px;font-weight:400;color:#4868a2;'>(11,925)</div>
<div class='t' style='left:366.60px;top:553px;font-size:8.4px;font-weight:400;color:#4868a2;'>(15,530)</div>
<div class='t' style='left:425.60px;top:553px;font-size:8.4px;font-weight:400;color:#4868a2;'>(19,135)</div>
<div class='t' style='left:487.25px;top:553px;font-size:8.4px;font-weight:400;color:#4868a2;'>(6,495)</div>
<div class='t' style='left:544.25px;top:553px;font-size:8.4px;font-weight:400;color:#4868a2;'>(6,495)</div>
<div class='t' style='left:602.25px;top:553px;font-size:8.4px;font-weight:400;color:#4868a2;'>(6,495)</div>
<div class='t' style='left:660.25px;top:553px;font-size:8.4px;font-weight:400;color:#4868a2;'>(6,495)</div>
<div class='t' style='left:714.60px;top:553px;font-size:8.4px;font-weight:400;color:#4868a2;'>(25,455)</div>
<div class='t' style='left:771.60px;top:553px;font-size:8.4px;font-weight:400;color:#4868a2;'>(25,455)</div>
<div class='t' style='left:829.60px;top:553px;font-size:8.4px;font-weight:400;color:#4868a2;'>(25,355)</div>
<div class='t' style='left:887.60px;top:553px;font-size:8.4px;font-weight:400;color:#4868a2;'>(25,355)</div>
<div class='t' style='left:938.94px;top:553px;font-size:8.4px;font-weight:400;color:#55698f;'>(174,190)</div>
<div class='b' style='left:987px;top:48px;width:13.00px;height:511.00px;background:#fbfbfb;'></div>
<div class='b' style='left:986.5px;top:48px;width:1.00px;height:511.00px;background:#e0e0e0;'></div>
<svg class='b' style='left:990.5px;top:53px;' width='6' height='5' viewBox='0 0 6 5'><path d='M3 0.5 L5.5 4.5 H0.5 Z' fill='#6b6b6b'/></svg>
<div class='b' style='left:991px;top:62.3px;width:6.00px;height:354.20px;background:#7a7a7a;border-radius:3px;'></div>
<svg class='b' style='left:990.5px;top:551.5px;' width='6' height='5' viewBox='0 0 6 5'><path d='M3 4.5 L5.5 0.5 H0.5 Z' fill='#6b6b6b'/></svg>
<div class='b' style='left:0px;top:559.2px;width:1000.00px;height:17.80px;background:#e7e8ec;'></div>
<div class='b' style='left:0px;top:577px;width:1000.00px;height:2.50px;background:#f1f1f3;'></div>
<svg class='b' style='left:16px;top:565.5px;' width='7' height='8' viewBox='0 0 7 8'><path d='M4.8 1 L2.2 4 L4.8 7' fill='none' stroke='#a8a8a8' stroke-width='1'/></svg>
<svg class='b' style='left:36px;top:565.5px;' width='7' height='8' viewBox='0 0 7 8'><path d='M2.2 1 L4.8 4 L2.2 7' fill='none' stroke='#505050' stroke-width='1'/></svg>
<div class='t' style='left:78.70px;top:565px;font-size:9.8px;font-weight:400;color:#383838;transform:scaleX(0.9631);transform-origin:0 0;'>How To</div>
<div class='b' style='left:121px;top:561.2px;width:40.80px;height:15.00px;background:#fafa8e;border-radius:2px;'></div>
<div class='t' style='left:127.00px;top:565px;font-size:9.8px;font-weight:400;color:#383838;transform:scaleX(0.8821);transform-origin:0 0;'>IS 2026</div>
<div class='b' style='left:166.6px;top:561.2px;width:43.60px;height:15.00px;background:#fafa8e;border-radius:2px;'></div>
<div class='t' style='left:172.60px;top:565px;font-size:9.8px;font-weight:400;color:#383838;transform:scaleX(0.8675);transform-origin:0 0;'>CF 2026</div>
<div class='t' style='left:222.80px;top:565px;font-size:9.8px;font-weight:400;color:#383838;transform:scaleX(0.8485);transform-origin:0 0;'>BS 2026</div>
<div class='t' style='left:272.00px;top:565px;font-size:9.8px;font-weight:400;color:#383838;transform:scaleX(0.9181);transform-origin:0 0;'>Statements Summary 2026</div>
<div class='b' style='left:393px;top:561.2px;width:58.00px;height:15.00px;background:#fafa8e;border-radius:2px;'></div>
<div class='t' style='left:399.00px;top:565px;font-size:9.8px;font-weight:400;color:#383838;transform:scaleX(0.8141);transform-origin:0 0;'>CAPEX 2026</div>
<div class='b' style='left:459px;top:561.2px;width:56.00px;height:15.00px;background:#fafa8e;border-radius:2px;'></div>
<div class='t' style='left:465.00px;top:565px;font-size:9.8px;font-weight:400;color:#383838;transform:scaleX(0.8696);transform-origin:0 0;'>OPEX 2026</div>
<div class='b' style='left:518px;top:559.2px;width:58.00px;height:17.80px;background:#ffffff;'></div>
<div class='b' style='left:526px;top:574.5px;width:42.00px;height:1.00px;background:#107c41;'></div>
<div class='t' style='left:526.00px;top:564px;font-size:9.8px;font-weight:400;color:#222;transform:scaleX(0.9518);transform-origin:0 0;'>D&amp;A 2026</div>
<div class='b' style='left:580px;top:561.2px;width:55.00px;height:15.00px;background:#fafa8e;border-radius:2px;'></div>
<div class='t' style='left:586.00px;top:565px;font-size:9.8px;font-weight:400;color:#383838;transform:scaleX(0.8875);transform-origin:0 0;'>H2SA 2026</div>
<div class='b' style='left:642px;top:561.2px;width:39.00px;height:15.00px;background:#fafa8e;border-radius:2px;'></div>
<div class='t' style='left:648.00px;top:565px;font-size:9.8px;font-weight:400;color:#383838;transform:scaleX(0.8289);transform-origin:0 0;'>IS 2027</div>
<div class='b' style='left:687px;top:561.2px;width:43.00px;height:15.00px;background:#fafa8e;border-radius:2px;'></div>
<div class='t' style='left:693.00px;top:565px;font-size:9.8px;font-weight:400;color:#383838;transform:scaleX(0.8516);transform-origin:0 0;'>CF 2027</div>
<div class='t' style='left:742.00px;top:565px;font-size:9.8px;font-weight:400;color:#383838;transform:scaleX(0.8512);transform-origin:0 0;'>BS 2027</div>
<div class='t' style='left:792.00px;top:565px;font-size:9.8px;font-weight:400;color:#383838;transform:scaleX(0.9129);transform-origin:0 0;'>Statements Summary</div>
<div class='b' style='left:214px;top:562px;width:0.80px;height:13.00px;background:#d6d6da;'></div>
<div class='b' style='left:264px;top:562px;width:0.80px;height:13.00px;background:#d6d6da;'></div>
<div class='b' style='left:388px;top:562px;width:0.80px;height:13.00px;background:#d6d6da;'></div>
<div class='b' style='left:736px;top:562px;width:0.80px;height:13.00px;background:#d6d6da;'></div>
<div class='b' style='left:783px;top:562px;width:0.80px;height:13.00px;background:#d6d6da;'></div>
<svg class='b' style='left:886px;top:567px;' width='9' height='4' viewBox='0 0 9 4'><circle cx='1.3' cy='2' r='1' fill='#444'/><circle cx='4.5' cy='2' r='1' fill='#444'/><circle cx='7.7' cy='2' r='1' fill='#444'/></svg>
<svg class='b' style='left:907px;top:564px;' width='10' height='10' viewBox='0 0 10 10'><path d='M5 0.5 V9.5 M0.5 5 H9.5' stroke='#444' stroke-width='1.1'/></svg>
<svg class='b' style='left:930px;top:565px;' width='4' height='9' viewBox='0 0 4 9'><circle cx='2' cy='1.3' r='0.9' fill='#555'/><circle cx='2' cy='4.5' r='0.9' fill='#555'/><circle cx='2' cy='7.7' r='0.9' fill='#555'/></svg>
<svg class='b' style='left:945px;top:566px;' width='5' height='7' viewBox='0 0 5 7'><path d='M4.5 0.5 V6.5 L0.5 3.5 Z' fill='#555'/></svg>
<div class='b' style='left:953.8px;top:567px;width:21.70px;height:4.80px;background:#6e6e6e;border-radius:2.4px;'></div>
<svg class='b' style='left:981px;top:566px;' width='5' height='7' viewBox='0 0 5 7'><path d='M0.5 0.5 V6.5 L4.5 3.5 Z' fill='#555'/></svg>
<div class='b' style='left:0px;top:579.5px;width:1000.00px;height:12.50px;background:#f3f3f3;'></div>
<div class='t' style='left:7.20px;top:584px;font-size:7.6px;font-weight:400;color:#303030;transform:scaleX(0.8381);transform-origin:0 0;'>Ready</div>
<svg class='b' style='left:39px;top:583.5px;' width='11' height='9' viewBox='0 0 11 9'><rect x='0.5' y='0.5' width='10' height='8' fill='none' stroke='#555' stroke-width='1'/><path d='M0.5 3 H10.5' stroke='#555'/><circle cx='7' cy='6' r='1.6' fill='#555'/></svg>
<svg class='b' style='left:60px;top:582.5px;' width='11' height='10' viewBox='0 0 11 10'><path d='M5 1 L5 9 M1.5 3 H8.5 M3 9 L5 5 L7 9' fill='none' stroke='#444' stroke-width='1.1'/><path d='M7.5 7 L9 8.5 L10.8 5.5' fill='none' stroke='#444' stroke-width='0.9'/></svg>
<div class='t' style='left:72.00px;top:584px;font-size:7.2px;font-weight:700;color:#222;transform:scaleX(0.9233);transform-origin:0 0;'>Accessibility: Investigate</div>
<div class='b' style='left:807.6px;top:580px;width:24.00px;height:12.00px;background:#dedede;'></div>
<svg class='b' style='left:814.8px;top:583px;' width='9' height='9' viewBox='0 0 9 9'><path d='M0.5 0.5 H8.5 V8.5 H0.5 Z M0.5 3.2 H8.5 M0.5 5.9 H8.5 M3.2 0.5 V8.5 M5.9 0.5 V8.5' fill='none' stroke='#444' stroke-width='0.9'/></svg>
<svg class='b' style='left:840px;top:583px;' width='10' height='9' viewBox='0 0 10 9'><path d='M0.5 0.5 H9.5 V8.5 H0.5 Z M3.5 0.5 V8.5 M6.5 0.5 V8.5' fill='none' stroke='#555' stroke-width='0.9'/></svg>
<svg class='b' style='left:866.4px;top:583px;' width='10' height='9' viewBox='0 0 10 9'><path d='M0.5 0.5 H9.5 V8.5 H0.5 Z M3 0.5 V5 H7 V0.5 M0.5 5 H9.5' fill='none' stroke='#555' stroke-width='0.9'/></svg>
<div class='b' style='left:888px;top:586.8px;width:5.60px;height:1.00px;background:#777;'></div>
<div class='b' style='left:896.4px;top:586.8px;width:64.60px;height:0.80px;background:#888;'></div>
<div class='b' style='left:927px;top:583.7px;width:3.70px;height:7.00px;background:#444;'></div>
<svg class='b' style='left:963px;top:584px;' width='7' height='7' viewBox='0 0 7 7'><path d='M3.5 0.5 V6.5 M0.5 3.5 H6.5' stroke='#777' stroke-width='0.9'/></svg>
<div class='t' style='left:978.00px;top:584px;font-size:7.2px;font-weight:400;color:#444;transform:scaleX(0.8972);transform-origin:0 0;'>100%</div>
</body></html>
